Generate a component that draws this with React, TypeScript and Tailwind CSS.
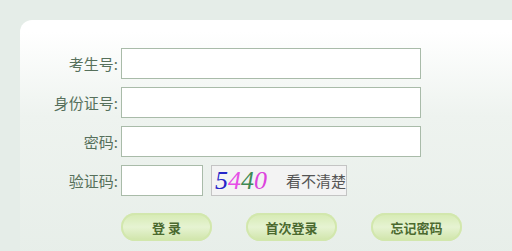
export default function App() {
  const rows = ['考生号', '身份证号', '密码']

  return (
    <div className="w-[512px] h-[251px] overflow-hidden bg-[#e5ede8] pt-[20px] pl-[20px] font-['Noto_Sans_CJK_SC','Liberation_Sans',sans-serif]">
      <div className="h-[240px] rounded-tl-[12px] bg-gradient-to-b from-white from-[5%] via-[#eef3ef] via-[40%] to-[#e7eee9] pt-[28px]">
        {/* fields */}
        <div className="flex flex-col gap-[8px]">
          {rows.map((label) => (
            <div key={label} className="flex items-center h-[31px]">
              <span className="w-[101px] pr-[3px] text-right text-[15px] leading-none text-[#56705b]">
                {label}:
              </span>
              <input
                type="text"
                className="w-[300px] h-[31px] border border-[#a9bba9] bg-white outline-none"
              />
            </div>
          ))}

          <div className="flex items-center h-[31px]">
            <span className="w-[101px] pr-[3px] text-right text-[15px] leading-none text-[#56705b]">
              验证码:
            </span>
            <input
              type="text"
              className="w-[82px] h-[31px] border border-[#a9bba9] bg-white outline-none"
            />
            <div className="ml-[8px] w-[136px] h-[31px] border border-[#c4c4c4] bg-[#f3f3f3] flex items-center">
              <span className="pl-[3px] font-['Liberation_Serif',serif] italic text-[26px] leading-none">
                <span className="text-[#2525c8]">5</span>
                <span className="text-[#e64de6]">4</span>
                <span className="text-[#3f8a55]">4</span>
                <span className="text-[#dd44dd]">0</span>
              </span>
              <span className="ml-auto text-[15px] leading-none text-[#555]">看不清楚</span>
            </div>
          </div>
        </div>

        {/* buttons */}
        <div className="flex gap-[34px] pl-[101px] mt-[17px]">
          {['登 录', '首次登录', '忘记密码'].map((t) => (
            <button
              key={t}
              className="w-[91px] h-[28px] rounded-full bg-gradient-to-b from-[#d5eab1] via-[#e6f3d2] to-[#cfe4a8] shadow-[inset_0_0_0_2px_#d2e7ad] text-[13px] font-bold text-[#4b6a2f] leading-none"
            >
              {t}
            </button>
          ))}
        </div>
      </div>
    </div>
  )
}
